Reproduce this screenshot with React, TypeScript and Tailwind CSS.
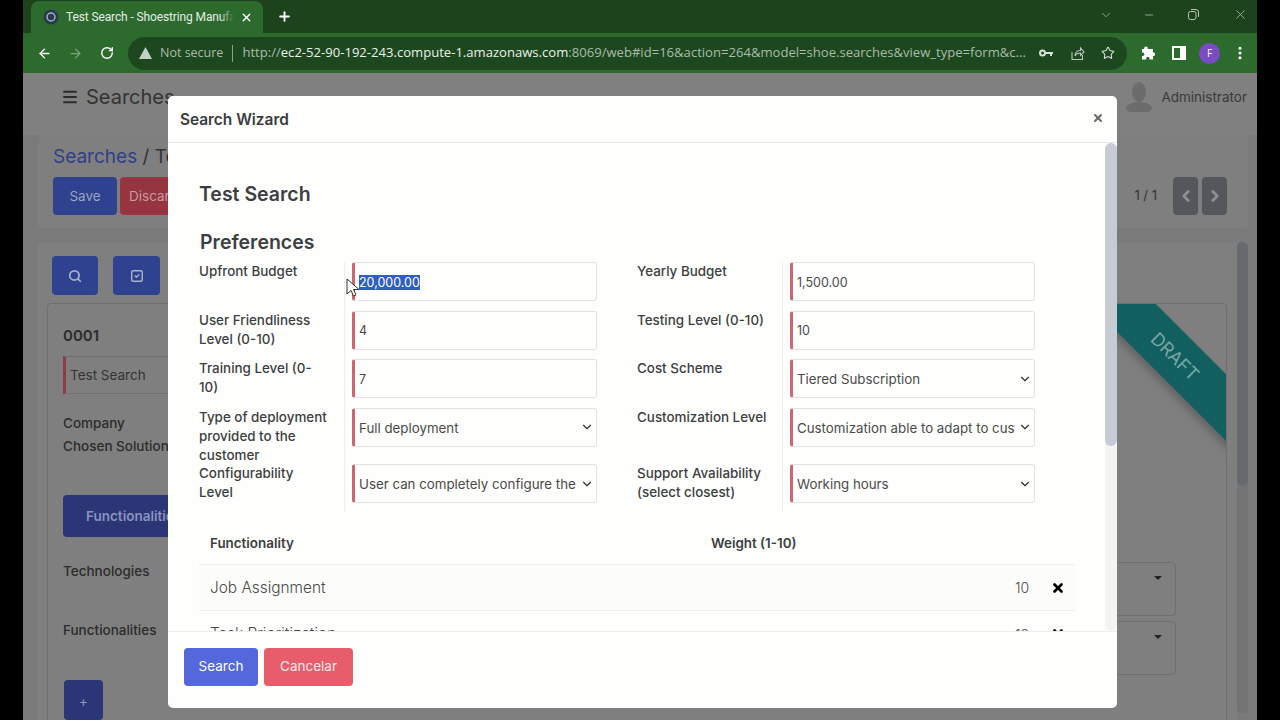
import { ArrowLeft, ArrowRight, RotateCw, Star, ChevronDown, ChevronLeft, ChevronRight, Search, SquareCheck, X, Minus, Menu, Plus, MoreVertical } from "lucide-react";

function Field({ value, select, selected }: { value: string; select?: boolean; selected?: boolean }) {
  return (
    <div className="w-[245px] h-[39px] flex items-center rounded-[3px] border border-[#e2e2e2] border-l-[3px] border-l-[#cf6472] pl-[4px] pr-[2px] bg-[#fefefc] text-[#4a4a4a]">
      <span className={`flex-1 overflow-hidden whitespace-nowrap pt-[3px] ${select ? "text-[13.3px]" : "text-[12.5px]"}`}>
        {selected ? <span className="bg-[#2f5fc0] text-white">{value}</span> : value}
      </span>
      {select && <ChevronDown size={14} strokeWidth={2} className="shrink-0 text-[#333] ml-[3px]" />}
    </div>
  );
}

function Row({ h, l1, v1, s1, l2, v2, s2, sel }: { h: string; l1: string; v1: string; s1?: boolean; l2: string; v2: string; s2?: boolean; sel?: boolean }) {
  return (
    <div className={`flex ${h}`}>
      <div className="w-[146px] pr-[14px] border-r border-[#eeeeec] text-[13.4px] leading-[19px] font-medium text-[#3c3f42]">{l1}</div>
      <div className="w-[292px] pl-[7px]"><Field value={v1} select={s1} selected={sel} /></div>
      <div className="w-[146px] pr-[14px] border-r border-[#eeeeec] text-[13.4px] leading-[19px] font-medium text-[#3c3f42]">{l2}</div>
      <div className="pl-[7px]"><Field value={v2} select={s2} /></div>
    </div>
  );
}

function Background() {
  return (
    <div className="absolute inset-0 bg-[#7a7a7a] flex flex-col">
      <div className="h-[62px] shrink-0 bg-[#808080] flex items-start pt-[9px] pl-[38px] pr-[10px] text-[#2b2b2b]">
        <Menu size={18} strokeWidth={2.5} className="mt-[6px]" />
        <span className="ml-[7px] text-[20px] leading-[30px] text-[#333]">Searches</span>
        <span className="flex-1" />
        <svg width="26" height="30" viewBox="0 0 26 30" className="mr-[9px]"><ellipse cx="13" cy="10" rx="7" ry="10" fill="#6c6c6c" /><ellipse cx="13" cy="26" rx="13" ry="6" fill="#6c6c6c" /></svg>
        <span className="text-[13.5px] leading-[30px] text-[#3a3a3a]">Administrator</span>
      </div>
      <div className="h-[93px] shrink-0 mx-[15px] w-[1210px] bg-[#7f7f7f] rounded pl-[15px] pr-[21px] pt-[9px]">
        <div className="text-[19px] leading-[26px] text-[#333]"><span className="text-[#2f3f88]">Searches</span> / Test Search</div>
        <div className="flex items-center mt-[7px]">
          <div className="w-[64px] h-[38px] rounded bg-[#2e428f] text-[#9aa3c6] text-[13.5px] flex items-center justify-center">Save</div>
          <div className="ml-[3px] w-[90px] h-[38px] rounded bg-[#96343f] text-[#c99aa0] text-[13.5px] flex items-center pl-[9px]">Discard</div>
          <span className="flex-1" />
          <span className="text-[13px] text-[#333] mr-[16px]">1 / 1</span>
          <div className="w-[25px] h-[38px] rounded bg-[#54575c] flex items-center justify-center text-[#8e9093]"><ChevronLeft size={18} strokeWidth={3.5} /></div>
          <div className="ml-[4px] w-[25px] h-[38px] rounded bg-[#54575c] flex items-center justify-center text-[#8e9093]"><ChevronRight size={18} strokeWidth={3.5} /></div>
        </div>
      </div>
      <div className="mt-[14px] flex-1 flex ml-[15px] min-h-0">
        <div className="w-[1199px] shrink-0 bg-[#7f7f7f] rounded-t pt-[14px] pl-[14px] overflow-hidden">
          <div className="flex gap-[15px]">
            <div className="w-[46px] h-[39px] rounded bg-[#2e428f] flex items-center justify-center text-[#a8b0cc]"><Search size={14} strokeWidth={3} /></div>
            <div className="w-[47px] h-[39px] rounded bg-[#2e428f] flex items-center justify-center text-[#a8b0cc]"><SquareCheck size={14} strokeWidth={2.5} /></div>
          </div>
          <div className="relative mt-[8px] ml-[-5px] w-[1180px] h-[500px] border border-[#707070] rounded overflow-hidden pl-[15px] pt-[21px]">
            <div className="text-[15px] font-semibold text-[#2c2c2c] leading-[22px]">0001</div>
            <div className="mt-[9px] w-[300px] h-[38px] border border-[#707070] border-l-[3px] border-l-[#8f3a44] flex items-center pl-[4px] text-[13.5px] text-[#333]">Test Search</div>
            <div className="mt-[19px] text-[13.5px] font-medium text-[#2c2c2c] leading-[20px]">Company</div>
            <div className="mt-[3px] text-[13.5px] font-medium text-[#2c2c2c] leading-[20px]">Chosen Solution</div>
            <div className="mt-[39px] w-[200px] h-[42px] rounded bg-[#2b3676] text-[#8a93bd] text-[13.5px] font-semibold flex items-center pl-[23px]">Functionalities</div>
            <div className="mt-[24px] text-[13.5px] font-medium text-[#2c2c2c] leading-[20px]">Technologies</div>
            <div className="mt-[39px] text-[13.5px] font-medium text-[#2c2c2c] leading-[20px]">Functionalities</div>
            <div className="mt-[40px] ml-[1px] w-[39px] h-[40px] rounded bg-[#2b3676] text-[#8a93bd] text-[14px] flex items-center justify-center">+</div>
            <div className="absolute left-[977px] top-[29px] w-[300px] h-[47px] rotate-45 bg-[#125f60] shadow-[0_4px_8px_rgba(0,0,0,0.25)] flex items-center justify-center text-[#78a5a5] text-[18px]">DRAFT</div>
            <div className="absolute left-[900px] top-[258px] w-[228px] h-[54px] border border-[#707070] rounded flex justify-end pr-[13px] pt-[9px]"><span className="mt-[4px] border-x-[4px] border-x-transparent border-t-[4px] border-t-[#222] h-0" /></div>
            <div className="absolute left-[900px] top-[317px] w-[228px] h-[54px] border border-[#707070] rounded flex justify-end pr-[13px] pt-[9px]"><span className="mt-[4px] border-x-[4px] border-x-transparent border-t-[4px] border-t-[#222] h-0" /></div>
          </div>
        </div>
        <div className="ml-[0px] w-[11px] h-[471px] shrink-0 rounded-full bg-[#737373]">
          <div className="h-[244px] rounded-full bg-[#666a6e]" />
        </div>
      </div>
    </div>
  );
}

function Modal() {
  return (
    <div className="absolute left-[145px] top-[23px] w-[949px] h-[612px] rounded-[5px] bg-[#fefefc] flex flex-col overflow-hidden">
      <div className="h-[47px] shrink-0 border-b border-[#e8e8e6] flex items-center justify-between pl-[12px] pr-[13px]">
        <span className="text-[15.4px] font-semibold text-[#3a3d40] mt-[1px]">Search Wizard</span>
        <X size={12} strokeWidth={4} className="text-[#6b6b6b] -mt-[3px]" />
      </div>
      <div className="h-[488px] shrink-0 flex overflow-hidden">
        <div className="w-[937px] pl-[31px] overflow-hidden">
          <div className="text-[19.5px] font-semibold text-[#3c3f42] leading-[28px] mt-[37px]">Test Search</div>
          <div className="text-[19.5px] font-semibold text-[#3c3f42] leading-[28px] mt-[20px] ml-[1px]">Preferences</div>
          <div className="mt-[6px] flex flex-col">
            <Row h="h-[48.5px]" l1="Upfront Budget" v1="20,000.00" sel l2="Yearly Budget" v2="1,500.00" />
            <Row h="h-[48.5px]" l1="User Friendliness Level (0-10)" v1="4" l2="Testing Level (0-10)" v2="10" />
            <Row h="h-[48.5px]" l1="Training Level (0-10)" v1="7" l2="Cost Scheme" v2="Tiered Subscription" s2 />
            <Row h="h-[56.5px]" l1="Type of deployment provided to the customer" v1="Full deployment" s1 l2="Customization Level" v2="Customization able to adapt to customer needs" s2 />
            <Row h="h-[48px]" l1="Configurability Level" v1="User can completely configure the system" s1 l2="Support Availability (select closest)" v2="Working hours" s2 />
          </div>
          <div className="w-[876px] mt-[11px]">
            <div className="h-[42px] flex items-center pl-[11px] border-b border-[#eeeeec] text-[13.4px] font-semibold text-[#3c3f42]">
              <span className="w-[501px]">Functionality</span>
              <span>Weight (1-10)</span>
            </div>
            <div className="h-[46px] flex items-center pl-[11px] border-b border-[#eeeeec] bg-[#fcfcfa] text-[#4a4a4a]">
              <span className="text-[15.4px] font-light flex-1">Job Assignment</span>
              <span className="text-[14px] font-light w-[36px]">10</span>
              <X size={14} strokeWidth={4.5} className="text-black mr-[10px]" />
            </div>
            <div className="h-[46px] flex items-center pl-[11px] text-[#4a4a4a]">
              <span className="text-[15.4px] font-light flex-1">Task Prioritization</span>
              <span className="text-[14px] font-light w-[36px]">10</span>
              <X size={14} strokeWidth={4.5} className="text-black mr-[10px]" />
            </div>
          </div>
        </div>
        <div className="w-[12px] bg-[#f4f4f2] rounded-full">
          <div className="h-[303px] rounded-full bg-[#c6cbd4]" />
        </div>
      </div>
      <div className="flex-1 border-t border-[#eeeeec] flex gap-[6px] pl-[16px] pt-[16px]">
        <div className="w-[74px] h-[38px] rounded-[4px] bg-[#5468db] text-white text-[13.5px] pb-[1px] flex items-center justify-center">Search</div>
        <div className="w-[89px] h-[38px] rounded-[4px] bg-[#e85d6c] text-[#fde8ea] text-[13.5px] pb-[1px] flex items-center justify-center">Cancelar</div>
      </div>
    </div>
  );
}

function Chrome() {
  return (
    <div className="h-[73px] shrink-0 font-['Open_Sans',sans-serif]">
      <div className="h-[33px] bg-[#1c431c] flex items-end pl-[8px] text-white">
        <div className="relative w-[232px] h-[32px] rounded-t-[8px] bg-[#2c6a2e] flex items-center pl-[12px] overflow-hidden">
          <svg width="16" height="16" viewBox="0 0 16 16" className="shrink-0"><circle cx="8" cy="8" r="7.5" fill="#2b3a4a" /><circle cx="8" cy="8" r="4" fill="none" stroke="#9db3c9" strokeWidth="1.5" /></svg>
          <span className="relative ml-[7px] w-[168px] overflow-hidden whitespace-nowrap font-['Roboto',sans-serif] text-[12px] tracking-[-0.12px] text-[#e4ede4]">
            Test Search - Shoestring Manufacturing
            <span className="absolute right-0 top-0 h-full w-[14px] bg-gradient-to-r from-transparent to-[#2c6a2e]" />
          </span>
          <X size={13} strokeWidth={2.5} className="ml-[6px] shrink-0" />
        </div>
        <Plus size={15} strokeWidth={3} className="ml-[14px] mb-[9px]" />
        <span className="flex-1" />
        <div className="flex items-center self-start mt-[7px] text-[#b7c7b7]">
          <ChevronDown size={14} strokeWidth={1.2} className="mr-[30px]" />
          <Minus size={12} strokeWidth={1.5} className="mr-[33px]" />
          <svg width="11" height="11" viewBox="0 0 11 11" fill="none" stroke="currentColor" className="mr-[34px]"><rect x="0.5" y="2.5" width="7.5" height="8" rx="2" /><path d="M3 .5h5a2.5 2.5 0 012.5 2.5v5" /></svg>
          <X size={15} strokeWidth={1.2} className="mr-[9px]" />
        </div>
      </div>
      <div className="h-[40px] bg-[#2c6a2e] flex items-center pl-[14px] text-white">
        <ArrowLeft size={15} strokeWidth={2.2} />
        <ArrowRight size={15} strokeWidth={2} className="ml-[16px] text-[#7ba57c]" />
        <RotateCw size={14} strokeWidth={2.4} className="ml-[17px]" />
        <div className="ml-[14px] w-[999px] h-[33px] rounded-full bg-[#1d481f] flex items-center pl-[11px]">
          <svg width="13" height="12" viewBox="0 0 13 12"><path d="M6.5 0L13 12H0z" fill="#c3d0c3" /></svg>
          <span className="ml-[8px] text-[#a9bca9] text-[12.5px]">Not secure</span>
          <span className="ml-[9px] mr-[9px] h-[17px] w-px bg-[#8aa38a]" />
          <span className="w-[785px] whitespace-nowrap overflow-hidden text-[13.08px] text-[#a9bca9]">http://<span className="text-[#eaf1ea]">ec2-52-90-192-243.compute-1.amazonaws.com</span>:8069/web#id=16&amp;action=264&amp;model=shoe.searches&amp;view_type=form&amp;c...</span>
          <svg width="14" height="8" viewBox="0 0 14 8" className="ml-[12px] shrink-0"><circle cx="3.5" cy="4" r="2.5" fill="none" stroke="#d8e2d8" strokeWidth="2" /><path d="M6 3h8v2h-1v2h-2V5H6z" fill="#d8e2d8" /></svg>
          <svg width="15" height="15" viewBox="0 0 15 15" fill="none" stroke="#b9c9b9" strokeWidth="1.1" className="ml-[17px] shrink-0"><path d="M2 6v7.5h10.5V9" /><path d="M5 10c0-4 3-5.500 5.500-5.500V2L14 6l-3.500 3.500V7C8 7 6 8 5 10z" /></svg>
          <Star size={14} strokeWidth={1.8} className="ml-[16px] shrink-0 text-[#d8e2d8]" />
        </div>
        <svg width="14" height="14" viewBox="0 0 14 14" className="ml-[14px]"><path d="M5 0.500a1.800 1.800 0 011.800 1.800V3H12v3.500h.300a1.800 1.800 0 010 3.600H12V13.500H8.500V12.500a1.700 1.700 0 00-3.400 0v1H1V10h1a1.800 1.800 0 000-3.500H1V3h2.200v-.7A1.800 1.800 0 015 .5z" fill="#fff" /></svg>
        <svg width="14" height="14" viewBox="0 0 14 14" className="ml-[17px]"><rect x="1" y="1" width="12" height="12" fill="none" stroke="#fff" strokeWidth="2" /><rect x="8" y="1" width="5" height="12" fill="#fff" /></svg>
        <div className="ml-[13px] w-[21px] h-[21px] rounded-full bg-[#7b4bc4] text-white text-[10px] flex items-center justify-center">F</div>
        <MoreVertical size={16} strokeWidth={2.6} className="ml-[12px]" />
      </div>
    </div>
  );
}

export default function App() {
  return (
    <div className="w-[1280px] h-[720px] bg-black flex justify-center overflow-hidden font-['Inter',sans-serif]">
      <div className="w-[1234px] h-full flex flex-col">
        <Chrome />
        <div className="relative flex-1 overflow-hidden">
          <Background />
          <Modal />
          <svg width="14" height="20" viewBox="0 0 14 20" className="absolute left-[323px] top-[205px]"><path d="M1 1v15l4-3.500 2.500 5.500 2.500-1-2.500-5.500H13z" fill="#fff" stroke="#333" strokeWidth="1" /></svg>
        </div>
      </div>
    </div>
  );
}
